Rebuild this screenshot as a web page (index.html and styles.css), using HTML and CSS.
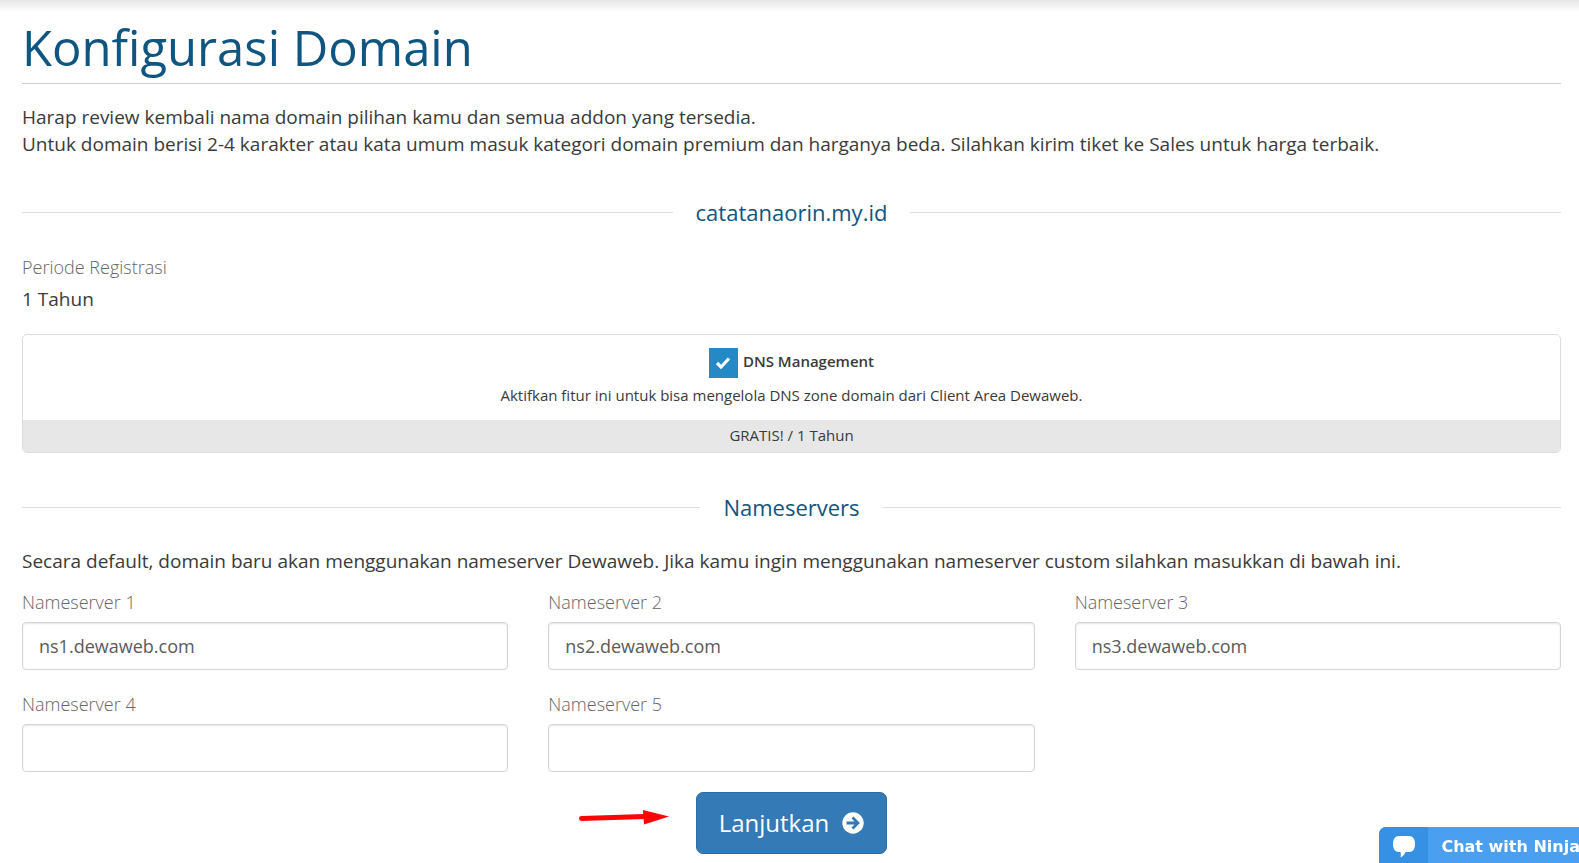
FILE: index.html
```html
<!DOCTYPE html>
<html lang="id">
<head>
    <meta charset="UTF-8">
    <meta name="viewport" content="width=device-width, initial-scale=1.0">
    <title>Konfigurasi Domain</title>
    <link rel="stylesheet" href="styles.css">
</head>
<body>

    <form class="container" action="#" method="post">
        <h1 class="page-title">Konfigurasi Domain</h1>

        <p class="intro">Harap review kembali nama domain pilihan kamu dan semua addon yang tersedia.<br>
        Untuk domain berisi 2-4 karakter atau kata umum masuk kategori domain premium dan harganya beda. Silahkan kirim tiket ke Sales untuk harga terbaik.</p>

        <h2 class="sub-heading">catatanaorin.my.id</h2>

        <div class="period">
            <div class="label">Periode Registrasi</div>
            <div>1 Tahun</div>
        </div>

        <!-- Addon domain -->
        <div class="addon">
            <div class="addon-body">
                <label class="addon-check">
                    <input type="checkbox" name="dnsmanagement" checked>
                    <span class="tick">
                        <svg width="16" height="14" viewBox="0 0 16 14"><path d="M2 7l4 4 8-8.500" fill="none" stroke="#fff" stroke-width="3.200"/></svg>
                    </span>
                    DNS Management
                </label>
                <p class="addon-text">Aktifkan fitur ini untuk bisa mengelola DNS zone domain dari Client Area Dewaweb.</p>
            </div>
            <div class="addon-price">GRATIS! / 1 Tahun</div>
        </div>

        <h2 class="sub-heading">Nameservers</h2>

        <p class="ns-text">Secara default, domain baru akan menggunakan nameserver Dewaweb. Jika kamu ingin menggunakan nameserver custom silahkan masukkan di bawah ini.</p>

        <div class="ns-grid">
            <div class="form-group">
                <label class="label" for="ns1">Nameserver 1</label>
                <input class="form-control" type="text" id="ns1" name="ns1" value="ns1.dewaweb.com">
            </div>
            <div class="form-group">
                <label class="label" for="ns2">Nameserver 2</label>
                <input class="form-control" type="text" id="ns2" name="ns2" value="ns2.dewaweb.com">
            </div>
            <div class="form-group">
                <label class="label" for="ns3">Nameserver 3</label>
                <input class="form-control" type="text" id="ns3" name="ns3" value="ns3.dewaweb.com">
            </div>
            <div class="form-group">
                <label class="label" for="ns4">Nameserver 4</label>
                <input class="form-control" type="text" id="ns4" name="ns4">
            </div>
            <div class="form-group">
                <label class="label" for="ns5">Nameserver 5</label>
                <input class="form-control" type="text" id="ns5" name="ns5">
            </div>
        </div>

        <div class="actions">
            <button type="submit" class="btn">
                Lanjutkan
                <svg width="22" height="22" viewBox="0 0 22 22">
                    <circle cx="11" cy="11" r="10.700" fill="#fff"/>
                    <path d="M4.500 11h11M10.500 5.500L16 11l-5.500 5.500" fill="none" stroke="#337ab7" stroke-width="2.800"/>
                </svg>
            </button>
            <svg class="arrow" width="90" height="16" viewBox="0 0 90 16">
                <path d="M2.500 9.500L66 7.500" stroke="#fb0606" stroke-width="5" stroke-linecap="round"/>
                <path d="M64 1l26 6.500L65 15.500z" fill="#fb0606"/>
            </svg>
        </div>
    </form>

    <button type="button" class="chat">
        <span class="chat-icon">
            <svg width="24" height="24" viewBox="0 0 24 24"><path d="M7 1h10c4 0 6 3 6 8s-2 8-6 8h-3.500c-1 2.500-2.500 4.500-5 5.500 .5-2 .5-3.500 0-5.500H7c-4 0-6-3-6-8s2-8 6-8z" fill="#fff"/></svg>
        </span>
        <span class="chat-text">Chat with Ninja</span>
    </button>

</body>
</html>
```

FILE: styles.css
```css
* {
    box-sizing: border-box;
}
body {
    margin: 0;
    background: linear-gradient(#e6e6e6, #fff 12px) no-repeat #fff;
    color: #3a3a3a;
    font-family: "Open Sans", "Noto Sans", sans-serif;
    font-size: 19px;
    line-height: 27px;
}
p, h1, h2 {
    margin: 0;
}
.container {
    padding: 20px 18px 8px 22px;
}
.page-title {
    padding-bottom: 8px;
    border-bottom: 1px solid #ccc;
    color: #0f5580;
    font-size: 49px;
    font-weight: 400;
    line-height: 55px;
}
.intro {
    margin-top: 20px;
}

/* Judul dengan garis di kiri dan kanan */
.sub-heading {
    display: flex;
    align-items: center;
    gap: 23px;
    margin: 38px 0 25px;
    color: #0f5580;
    font-size: 22px;
    font-weight: 400;
    line-height: 32px;
}
.sub-heading::before,
.sub-heading::after {
    content: "";
    flex: 1;
    height: 1px;
    background-color: #ddd;
}
.label {
    display: block;
    color: #666;
    font-size: 18px;
    font-weight: 300;
}
.period {
    margin-top: 26px;
}
.period .label {
    margin-bottom: 5px;
}

.addon {
    margin-top: 21px;
    border: 1px solid #ddd;
    border-radius: 5px;
    overflow: hidden;
    font-size: 15px;
    text-align: center;
}
.addon-body {
    padding: 13px 15px 11px;
}
.addon-check {
    display: flex;
    justify-content: center;
    align-items: flex-start;
    gap: 5px;
    font-weight: 600;
}
.addon-check input {
    position: absolute;
    opacity: 0;
}
.tick {
    display: flex;
    align-items: center;
    justify-content: center;
    width: 29px;
    height: 30px;
    background-color: #2489c5;
}
.addon-text {
    margin-top: 4px;
}
.addon-price {
    padding: 2px 2px 3px;
    background-color: #e7e7e7;
}

.ns-grid {
    display: grid;
    grid-template-columns: repeat(3, 1fr);
    gap: 21px 40px;
    margin-top: 14px;
}
.form-control {
    display: block;
    width: 100%;
    height: 48px;
    margin-top: 6px;
    padding: 0 16px;
    border: 1px solid #d5d5d5;
    border-radius: 4px;
    box-shadow: inset 0 1px 2px rgba(0, 0, 0, 0.1);
    background-color: #fff;
    color: #5a5a5a;
    font-family: inherit;
    font-size: 18px;
}

.actions {
    position: relative;
    display: flex;
    justify-content: center;
    margin-top: 20px;
}
.btn {
    display: flex;
    align-items: center;
    gap: 13px;
    padding: 14px 22px;
    border: 1px solid #2e6da4;
    border-radius: 7px;
    background-color: #337ab7;
    color: #fff;
    font-family: inherit;
    font-size: 24px;
    line-height: 32px;
    cursor: pointer;
}
.arrow {
    position: absolute;
    top: 17px;
    right: calc(50% + 123px);
}

/* Tombol chat di pojok kanan bawah */
.chat {
    position: fixed;
    right: -7px;
    bottom: -3px;
    display: flex;
    height: 39px;
    padding: 0;
    border: 0;
    border-radius: 7px 0 0 0;
    overflow: hidden;
    background-color: #4a9ff0;
    color: #fff;
    font-family: Verdana, "DejaVu Sans", sans-serif;
    font-size: 16px;
    font-weight: bold;
    line-height: 40px;
    cursor: pointer;
}
.chat-icon {
    display: flex;
    align-items: center;
    justify-content: center;
    width: 49px;
    background-color: #3690e3;
}
.chat-text {
    padding: 0 6px 0 13px;
}
```
